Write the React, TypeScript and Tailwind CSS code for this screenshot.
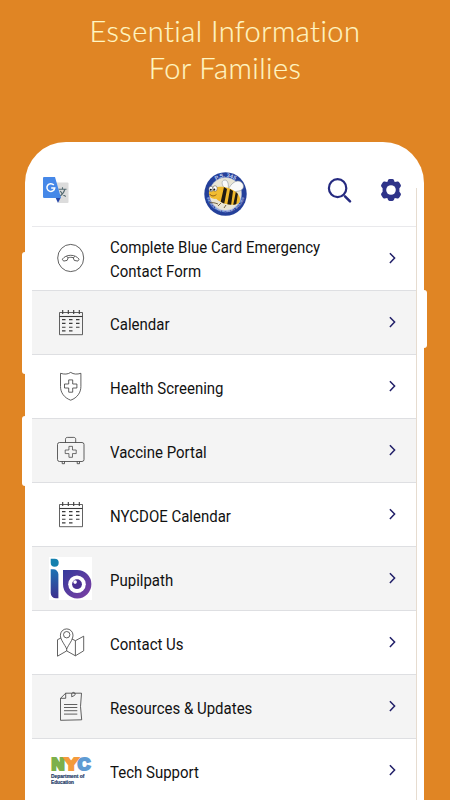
import type { ReactNode } from 'react';

const CROSS = 'M19.7 14.9h4v4.1h4.2v4h-4.2v4.2h-4V23h-4.2v-4h4.2z';

function LineIcon({ children }: { children: ReactNode }) {
  return (
    <svg width="44" height="43" viewBox="0 0 44 43" fill="none" stroke="#3a3a3a" strokeWidth="0.8" strokeLinejoin="round">
      {children}
    </svg>
  );
}

function PhoneIcon() {
  return (
    <LineIcon>
      <ellipse cx="21.7" cy="21" rx="13" ry="13.6" />
      <path d="M13.3 22.2c2-2.5 4.7-3.9 8.4-3.9s6.4 1.4 8.4 3.9l-1.3 1.9-3.5-.7-1.1-2.7c-1.7-.5-3.3-.5-5 0l-1.1 2.7-3.5.7z" />
      <path d="M17.5 19.5l1.7 1.2M25.9 19.5l-1.7 1.2" />
    </LineIcon>
  );
}

function CalendarIcon() {
  return (
    <LineIcon>
      <path d="M10.5 11.5h23v22.2h-23z" />
      <path d="M10.5 15.5h23" strokeWidth="1.1" />
      <path d="M13.7 9v4M19.3 9v4M24.7 9v4M30.3 9v4" strokeWidth="1.1" />
      <path
        d="M13 18.6h3.5M20 18.6h3.5M27 18.6h3.5M13 22.4h3.5M20 22.4h3.5M27 22.4h3.5M13 26.2h3.5M20 26.2h3.5M27 26.2h3.5M13 29.9h3.5M20 29.9h3.5"
        strokeWidth="1.1"
      />
    </LineIcon>
  );
}

function ShieldIcon() {
  return (
    <LineIcon>
      <path d="M11.5 8.3c3.9 1.2 7.2 1.1 10.2-.9 3 2 6.3 2.1 10.2.9v13.2c0 6-3.6 11.3-10.2 13.7-6.6-2.4-10.2-7.7-10.2-13.7z" />
      <path d={CROSS} />
    </LineIcon>
  );
}

function KitIcon() {
  return (
    <LineIcon>
      <rect x="8.5" y="13.5" width="26.5" height="19" rx="2" />
      <path d="M16.5 13.5v-3.2c0-1.2.7-1.9 1.9-1.9h6.4c1.2 0 1.9.7 1.9 1.9v3.2" />
      <path d="M13.2 32.5v2.2h2.3v-2.2M28.2 32.5v2.2h2.3v-2.2" />
      <path d={CROSS} transform="translate(2.4 4.1) scale(.89)" />
    </LineIcon>
  );
}

function PupilpathLogo() {
  return (
    <svg width="44" height="43" viewBox="0 0 44 43">
      <defs>
        <linearGradient id="stem" x1="0" y1="0" x2="0" y2="1">
          <stop offset="0" stopColor="#1d72b3" />
          <stop offset="1" stopColor="#3d2f8f" />
        </linearGradient>
        <linearGradient id="eye" x1="0" y1="0" x2="1" y2="1">
          <stop offset="0" stopColor="#343a9c" />
          <stop offset="1" stopColor="#7f3fa4" />
        </linearGradient>
      </defs>
      <path d="M0 0h43v43H0z" fill="#fff" />
      <path d="M1.7 1.7h4a4 4 0 1 1-4 4z" fill="#1480ae" />
      <path d="M1.7 12.3h2.5a5 5 0 0 1 5.2 5v24h-2.5a5.2 5.2 0 0 1-5.2-5.2z" fill="url(#stem)" />
      <path d="M14 13h14a14.2 14.2 0 1 1-14 14.2z" fill="url(#eye)" />
      <circle cx="28" cy="27.2" r="8.8" fill="#fff" />
      <circle cx="28" cy="27.2" r="4.9" fill="#4a2f92" />
      <circle cx="26.1" cy="25.1" r="1.8" fill="#fff" />
    </svg>
  );
}

function MapIcon() {
  return (
    <LineIcon>
      <path d="M17.7 28c-2-4.7-6.3-9-6.3-13.8a6.3 6.3 0 0 1 12.6 0c0 4.8-4.3 9.1-6.3 13.8z" />
      <circle cx="17.7" cy="13.7" r="3.2" />
      <path d="M11.9 17l-3.4 1.7v16.5l9.2-5.3 8.7 4.9 8.3-5V15.2l-8.3 4.5-3.5-1.8M17.7 28v2M26.4 19.7v15" />
    </LineIcon>
  );
}

function NoteIcon() {
  return (
    <LineIcon>
      <path d="M16.7 8.2h15.8l-1 13.3 1.2 13.3-21.2.5V13.3z" />
      <path d="M11.5 13.3h5.2V8.2" />
      <path d="M22.7 8.5v3.3l2.3-1.1a1.7 1.7 0 1 0-2-2.5" />
      <path d="M15 19.5h13.3M15 22.5h13.3M15 25.7h13.3M15 29.1h13.3" />
    </LineIcon>
  );
}

function NycLogo() {
  return (
    <svg width="44" height="43" viewBox="0 0 44 43" fontFamily="'Liberation Sans', sans-serif" fontWeight="700">
      <g fontSize="16" strokeWidth="2.2">
        <text x="2.6" y="21" textLength="13" lengthAdjust="spacingAndGlyphs" fill="#7cb04b" stroke="#7cb04b">N</text>
        <text x="28.8" y="21" textLength="12.5" lengthAdjust="spacingAndGlyphs" fill="#5f9bd3" stroke="#5f9bd3">C</text>
        <text x="15.2" y="21" textLength="14" lengthAdjust="spacingAndGlyphs" fill="#f49a3c" stroke="#f49a3c">Y</text>
      </g>
      <g fontSize="5.2" fill="#1c3a66" stroke="#1c3a66" strokeWidth="0.2">
        <text x="2" y="28.8" textLength="33.5" lengthAdjust="spacingAndGlyphs">Department of</text>
        <text x="2" y="34.6" textLength="23" lengthAdjust="spacingAndGlyphs">Education</text>
      </g>
    </svg>
  );
}

function TranslateIcon() {
  return (
    <svg width="26" height="27" viewBox="0 0 26 27">
      <path d="M12 5.5h12.5a1 1 0 0 1 1 1V25a1 1 0 0 1-1 1H16z" fill="#dcdcdc" />
      <path d="M15.5 12.2h8M19.5 10.2v2M22 12.2c-1 3.3-3 5.8-5.5 7.3M17.3 14c1.2 2.4 3 4.3 5.5 5.5" fill="none" stroke="#546a70" strokeWidth="1.1" />
      <path d="M12.5 20.5h5.3L15 26z" fill="#2848a8" />
      <path d="M1 0h11l6 21H1.5a1.3 1.3 0 0 1-1.5-1.3V1a1 1 0 0 1 1-1z" fill="#4688e8" />
      <path d="M10.8 8a3.9 3.9 0 1 0 .9 3.1H8.2" fill="none" stroke="#fff" strokeWidth="1.5" />
    </svg>
  );
}

function SchoolLogo() {
  return (
    <svg width="43" height="44" viewBox="0 0 43 44">
      <defs>
        <path id="arcTop" d="M4.9 22a16.6 16.9 0 0 1 33.2 0" />
        <path id="arcBottom" d="M2 20a19.5 20.3 0 0 0 39 0" />
        <clipPath id="body">
          <path d="M11 16c6-3 17 0 22 5 3 3 4 7 2 10-4 3-13 2-18-1-5-2-10-8-6-14z" />
        </clipPath>
      </defs>
      <ellipse cx="21.5" cy="22" rx="21.2" ry="21.8" fill="#24409a" />
      <ellipse cx="21.5" cy="22" rx="16" ry="16.6" fill="#e9e5d5" stroke="#b9c3de" strokeWidth="0.5" />
      <g fontFamily="'Liberation Sans', sans-serif" fontWeight="700" fill="#c4d2f3" textAnchor="middle">
        <text fontSize="5.5">
          <textPath href="#arcTop" startOffset="50%">P.S. 345</textPath>
        </text>
        <text fontSize="3.3">
          <textPath href="#arcBottom" startOffset="50%">PATROLMAN ROBERT BOLDEN</textPath>
        </text>
      </g>
      <path d="M22 18c-5-5-5-10-1-10 3 0 4 5 3 10zM24 18c3-7 9-11 13-8s3 8-2 9-7 1-11-1z" fill="#fafafa" stroke="#8c949c" strokeWidth="0.6" />
      <g clipPath="url(#body)">
        <path d="M4 8h34v26H4z" fill="#f0b82b" />
        <path d="M20 15l3 2-3 16h-4zM26 17l3 2-2 15h-4zM32 19l2 2-2 13h-3z" fill="#1f1a14" />
      </g>
      <circle cx="10.8" cy="21" r="6" fill="#f2bd31" />
      <path d="M5 31c4-1 6 0 9 1M17 31l-3 3M22 33l-2 3" fill="none" stroke="#57431c" strokeWidth="0.8" />
      <ellipse cx="7" cy="17" rx="2.2" ry="2.8" fill="#fff" stroke="#4c4538" strokeWidth="0.5" />
      <ellipse cx="11" cy="16.5" rx="2.2" ry="2.8" fill="#fff" stroke="#4c4538" strokeWidth="0.5" />
      <circle cx="6.8" cy="17.8" r="1" fill="#151515" />
      <circle cx="10.3" cy="17.5" r="1" fill="#151515" />
      <path d="M5.5 22c2 2.5 5 2.5 7 .3" fill="none" stroke="#79480e" strokeWidth="0.8" />
    </svg>
  );
}

function SearchIcon() {
  return (
    <svg width="25" height="25" viewBox="0 0 25 25" fill="none" stroke="#252a80" strokeLinecap="round">
      <ellipse cx="10.6" cy="10.2" rx="8.7" ry="9" strokeWidth="2.2" />
      <path d="M18 18.3l5 5" strokeWidth="2.5" />
    </svg>
  );
}

function GearIcon() {
  return (
    <svg width="22" height="22" viewBox="0 0 22 22">
      <path
        d="M8 1.2Q8.4.1 9.6.1H12.4Q13.6.1 14 1.2L14.7 2.9L17.4 2.5Q18.6 2.3 19.3 3.4L20.7 5.7Q21.3 6.8 20.6 7.7L19.4 9.2V12.8L20.6 14.3Q21.3 15.200 20.7 16.3L19.3 18.6Q18.6 19.7 17.4 19.5L14.7 19.1L14 20.8Q13.6 21.900 12.4 21.900H9.6Q8.4 21.900 8 20.8L7.3 19.1L4.6 19.5Q3.4 19.7 2.7 18.6L1.3 16.3Q.7 15.2 1.4 14.3L2.6 12.8V9.2L1.4 7.7Q.7 6.8 1.3 5.7L2.7 3.4Q3.4 2.3 4.6 2.5L7.3 2.9Z"
        fill="#2e3389"
      />
      <circle cx="11" cy="11" r="4.8" fill="#fff" />
    </svg>
  );
}

const items = [
  { label: 'Complete Blue Card Emergency Contact Form', icon: <PhoneIcon /> },
  { label: 'Calendar', icon: <CalendarIcon /> },
  { label: 'Health Screening', icon: <ShieldIcon /> },
  { label: 'Vaccine Portal', icon: <KitIcon /> },
  { label: 'NYCDOE Calendar', icon: <CalendarIcon /> },
  { label: 'Pupilpath', icon: <PupilpathLogo /> },
  { label: 'Contact Us', icon: <MapIcon /> },
  { label: 'Resources & Updates', icon: <NoteIcon /> },
  { label: 'Tech Support', icon: <NycLogo /> },
];

export default function App() {
  return (
    <div className="h-[800px] w-[450px] overflow-hidden bg-[#e08524]">
      <h1 className="h-[142px] pt-[13px] text-center font-['Lato'] text-[29px] leading-[36.5px] font-light tracking-[0.45px] text-[#fff6c4] [-webkit-text-stroke:0.2px_#fff6c4]">
        Essential Information
        <br />
        For Families
      </h1>

      <div className="relative ml-[25px] h-[658px] w-[399px] rounded-t-[41px] bg-white pl-[7px]">
        {/* side buttons */}
        <div className="absolute top-[110px] -left-[3px] h-[122px] w-[4px] rounded-l-[3px] bg-white" />
        <div className="absolute top-[274px] -left-[3px] h-[70px] w-[4px] rounded-l-[3px] bg-white" />
        <div className="absolute top-[148px] -right-[3px] h-[58px] w-[4px] rounded-r-[3px] bg-white" />
        <div className="absolute top-[46px] right-[7px] h-[612px] w-px bg-[#e6dcd0]" />

        <div className="w-[384px]">
          <header className="flex h-[85px] items-center border-b border-[#e9e9ec] pt-3 pl-[11px]">
            <TranslateIcon />
            <div className="mt-2 ml-[135px]">
              <SchoolLogo />
            </div>
            <div className="ml-20">
              <SearchIcon />
            </div>
            <div className="ml-7">
              <GearIcon />
            </div>
          </header>

          <ul>
            {items.map((item) => (
              <li key={item.label} className="flex h-16 items-center border-b border-[#dedfe2] pr-5 pl-[17px] even:bg-[#f4f4f4]">
                {item.icon}
                <span className="mt-[3px] ml-[16.5px] w-[230px] origin-left scale-x-[0.937] pt-px font-['Roboto'] text-base leading-6 text-[#111] in-[li:first-child]:pt-0">
                  {item.label}
                </span>
                <svg className="mb-px ml-auto" width="8" height="12" viewBox="0 0 8 12" fill="none" stroke="#211f68" strokeWidth="1.5">
                  <path d="M1.9 1.2l4.7 4.9-4.7 4.9" />
                </svg>
              </li>
            ))}
          </ul>
        </div>
      </div>
    </div>
  );
}
